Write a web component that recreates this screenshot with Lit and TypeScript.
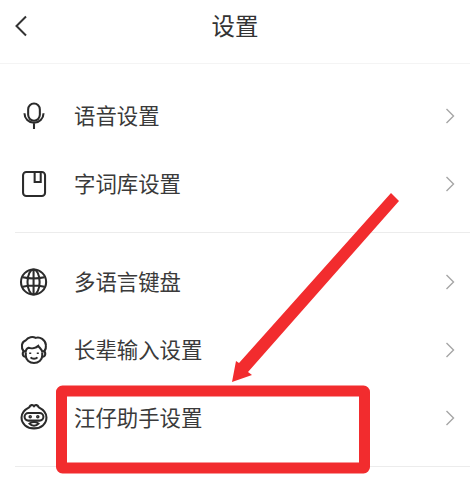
import { LitElement, html, css, svg } from "lit";
import { customElement } from "lit/decorators.js";

const ICONS = {
  mic: svg`<path d="M12 .5a5.400 5.400 0 0 0-5.400 5.400v5a5.400 5.400 0 0 0 10.800 0v-5A5.400 5.400 0 0 0 12 .5z"/><path d="M3.200 9.500a8.800 8.800 0 0 0 17.600 0M12 18.300V24"/>`,
  book: svg`<rect x="1.900" y="1" width="20.300" height="22" rx="3"/><path d="M12.600 1v9.200h5.600V1"/>`,
  globe: svg`<circle cx="11.600" cy="12" r="11.600"/><ellipse cx="11.600" cy="12" rx="5.600" ry="11.600"/><path d="M11.600 .4v23.200M1.600 7.600c6 1.300 14 1.300 20 0M1.600 16.400c6-1.300 14-1.300 20 0"/>`,
  elder: svg`<path d="M2.600 13.500C-.5 9.500.5 4.500 4.500 3 6.500-.2 11-.6 13.500.8 17.500-.6 22.500 2.500 23 7.500c.4 2.500-.6 4.500-1.600 6"/><path d="M4.200 14.500C4.400 12 5 10.500 7 10c3 1 7 0 9-1.800 1 1.800 3.500 2.800 3.800 6.300"/><path d="M4.400 14.500V17c0 4.500 3.600 7 7.600 7s7.600-2.500 7.600-7v-2.500"/><path d="M4 13c-3.300.3-3.300 5.200.5 5.500M20 13c3.300.3 3.300 5.200-.5 5.500"/><path d="M8.500 14.300v1.400M15.500 14.300v1.400M8.800 18.800c1.500 1.600 4.900 1.600 6.400 0"/>`,
  wang: svg`<path d="M7.500 2.200c1.500-2.600 3-2.600 4.500-1.100 1.500-1.500 3-1.500 4.500 1.100 4 2 7 5 7 9.400 0 6-5 10-11.500 10S.5 17.600.5 11.600c0-4.400 3-7.400 7-9.400z"/><rect x="3.300" y="7.400" width="17.400" height="7" rx="3.500"/><path d="M7.800 17.200c2.200 2.500 6.200 2.500 8.400 0-2-1.900-6.400-1.900-8.400 0z"/><circle cx="8.500" cy="10.900" r=".7"/><circle cx="15.500" cy="10.900" r=".7"/>`,
} as const;

type IconName = keyof typeof ICONS;
interface Row { icon: IconName; label: string; }

const GROUPS: Row[][] = [
  [
    { icon: "mic", label: "语音设置" },
    { icon: "book", label: "字词库设置" },
  ],
  [
    { icon: "globe", label: "多语言键盘" },
    { icon: "elder", label: "长辈输入设置" },
    { icon: "wang", label: "汪仔助手设置" },
  ],
];

@customElement("app-root")
export class AppRoot extends LitElement {
  static styles = css`
    :host {
      display: block;
      position: relative;
      width: 470px;
      height: 491px;
      overflow: hidden;
      background: #fff;
      font-family: "Noto Sans CJK SC", "Liberation Sans", sans-serif;
      color: #333;
    }
    .header {
      height: 64px;
      box-sizing: border-box;
      display: flex;
      align-items: center;
      justify-content: center;
      position: relative;
      border-bottom: 1px solid #f4f4f4;
      font-size: 23.500px;
      line-height: 1;
      padding-bottom: 11px;
    }
    .back {
      position: absolute;
      left: 14px;
      top: 14px;
      width: 14px;
      height: 24px;
      fill: none;
      stroke: #333;
      stroke-width: 2;
    }
    .group {
      margin: 0 0 0 15px;
      padding: 18px 0 14px;
      border-bottom: 1px solid #ececec;
    }
    .group + .group {
      padding-top: 15px;
    }
    .row {
      height: 68px;
      display: flex;
      align-items: center;
      padding-right: 15px;
    }
    .icon {
      width: 26px;
      height: 26px;
      margin-left: 6px;
      margin-right: 27px;
      flex: none;
      fill: none;
      stroke: #2b2b2b;
      stroke-width: 1.900;
      overflow: visible;
    }
    .label {
      flex: 1;
      font-size: 21.400px;
      line-height: 1;
      color: #3a3a3a;
      padding-bottom: 2px;
    }
    .chev {
      width: 10px;
      height: 16px;
      fill: none;
      stroke: #a6a6a6;
      stroke-width: 1.400;
    }
    .overlay {
      position: absolute;
      inset: 0;
      pointer-events: none;
    }
  `;

  render() {
    return html`
      <div class="header">
        <svg class="back" viewBox="0 0 14 24"><path d="M12 2.500 2.500 12 12 21.500"/></svg>
        设置
      </div>
      ${GROUPS.map(
        (g) => html`<div class="group">
          ${g.map(
            (r) => html`<div class="row">
              <svg class="icon" viewBox="0 0 24 24">${ICONS[r.icon]}</svg>
              <span class="label">${r.label}</span>
              <svg class="chev" viewBox="0 0 10 16"><path d="M1.500 1 8.500 8l-7 7"/></svg>
            </div>`
          )}
        </div>`
      )}
      <svg class="overlay" viewBox="0 0 470 491">
        <rect x="61.500" y="391" width="303" height="77" rx="1" fill="none" stroke="#f22c2e" stroke-width="11"/>
        <path d="M391 193 399 201 248 372 252 375 232 382 236 361 239 363z" fill="#f22c2e"/>
      </svg>
    `;
  }
}
